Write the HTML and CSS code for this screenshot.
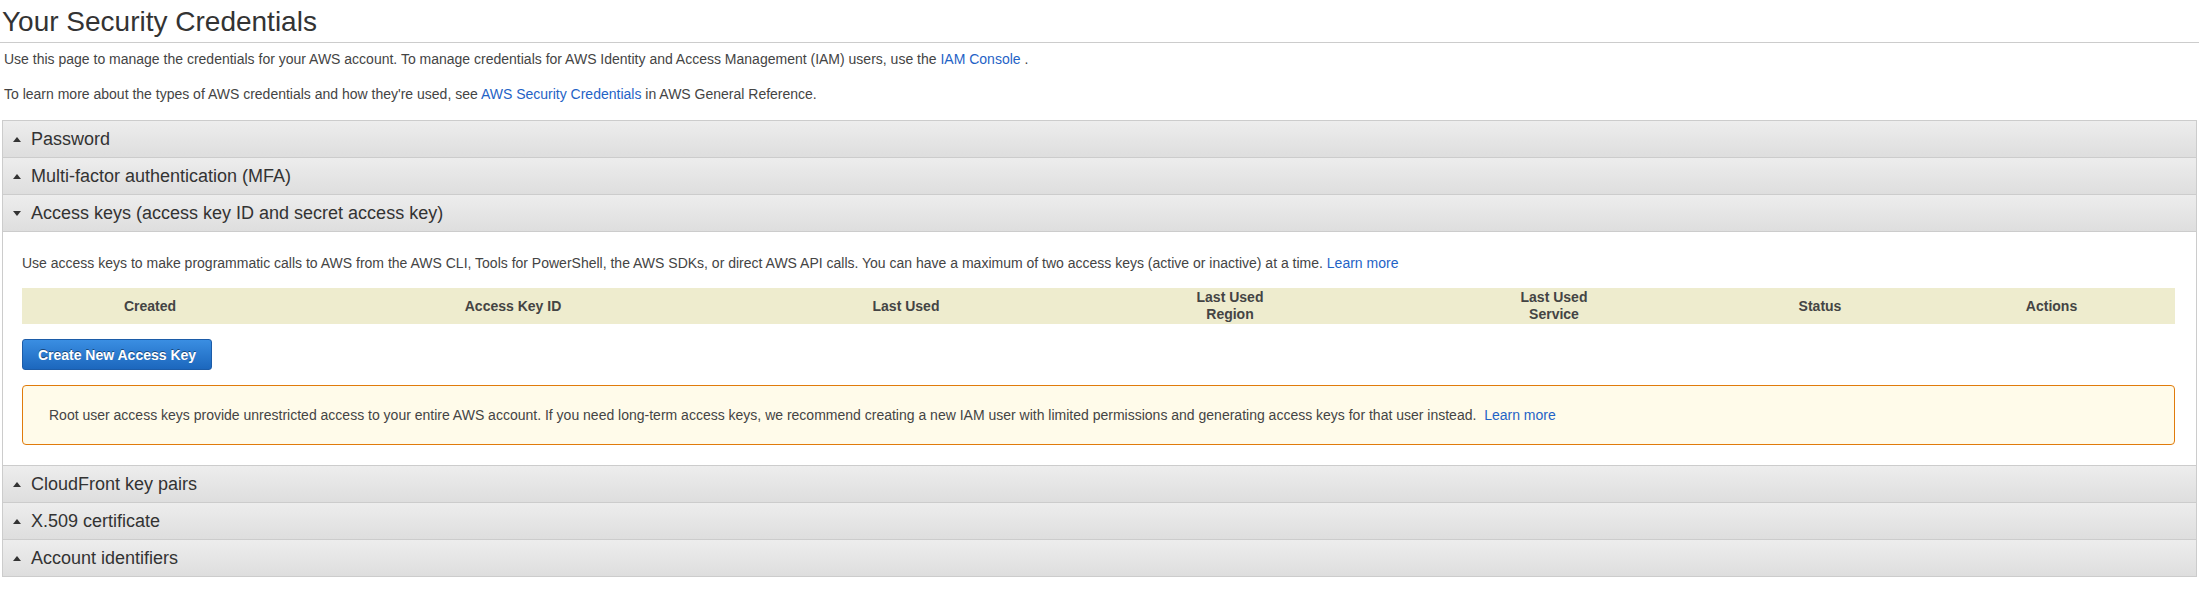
FILE: index.html
```html
<!DOCTYPE html>
<html lang="en">
<head>
<meta charset="utf-8">
<title>Your Security Credentials</title>
<link rel="stylesheet" href="styles.css">
</head>
<body>
<div class="page">
  <h1 class="title">Your Security Credentials</h1>
  <div class="content">
    <p class="intro first">Use this page to manage the credentials for your AWS account. To manage credentials for AWS Identity and Access Management (IAM) users, use the <a class="link" href="#">IAM Console</a> .</p>
    <p class="intro second">To learn more about the types of AWS credentials and how they're used, see <a class="link" href="#">AWS Security Credentials</a> in AWS General Reference.</p>

    <div class="accordion">
      <section class="acc-item">
        <div class="acc-head"><svg class="caret" viewBox="0 0 8 5" width="8" height="5"><polygon points="4,0 8,5 0,5"/></svg><span>Password</span></div>
      </section>
      <section class="acc-item">
        <div class="acc-head"><svg class="caret" viewBox="0 0 8 5" width="8" height="5"><polygon points="4,0 8,5 0,5"/></svg><span>Multi-factor authentication (MFA)</span></div>
      </section>
      <section class="acc-item open">
        <div class="acc-head"><svg class="caret" viewBox="0 0 8 5" width="8" height="5"><polygon points="0,0 8,0 4,5"/></svg><span>Access keys (access key ID and secret access key)</span></div>
        <div class="acc-body">
          <p class="desc">Use access keys to make programmatic calls to AWS from the AWS CLI, Tools for PowerShell, the AWS SDKs, or direct AWS API calls. You can have a maximum of two access keys (active or inactive) at a time. <a class="link" href="#">Learn more</a></p>
          <table class="keys">
            <colgroup>
              <col class="c1"><col class="c2"><col class="c3"><col class="c4"><col class="c5"><col class="c6"><col class="c7">
            </colgroup>
            <thead>
              <tr>
                <th>Created</th>
                <th>Access Key ID</th>
                <th>Last Used</th>
                <th>Last Used<br>Region</th>
                <th>Last Used<br>Service</th>
                <th>Status</th>
                <th>Actions</th>
              </tr>
            </thead>
          </table>
          <button class="btn-primary" type="button">Create New Access Key</button>
          <div class="warning">Root user access keys provide unrestricted access to your entire AWS account. If you need long-term access keys, we recommend creating a new IAM user with limited permissions and generating access keys for that user instead.&nbsp; <a class="link" href="#">Learn more</a></div>
        </div>
      </section>
      <section class="acc-item">
        <div class="acc-head"><svg class="caret" viewBox="0 0 8 5" width="8" height="5"><polygon points="4,0 8,5 0,5"/></svg><span>CloudFront key pairs</span></div>
      </section>
      <section class="acc-item">
        <div class="acc-head"><svg class="caret" viewBox="0 0 8 5" width="8" height="5"><polygon points="4,0 8,5 0,5"/></svg><span>X.509 certificate</span></div>
      </section>
      <section class="acc-item">
        <div class="acc-head"><svg class="caret" viewBox="0 0 8 5" width="8" height="5"><polygon points="4,0 8,5 0,5"/></svg><span>Account identifiers</span></div>
      </section>
    </div>
  </div>
</div>
</body>
</html>
```

FILE: styles.css
```css
html, body {
  margin: 0;
  padding: 0;
  background: #ffffff;
}

body {
  font-family: "Liberation Sans", Arial, sans-serif;
  color: #444444;
  font-size: 14px;
}

.title {
  margin: 0;
  padding: 6px 0 4px 2px;
  font-size: 28px;
  line-height: 32px;
  font-weight: normal;
  color: #333333;
  border-bottom: 1px solid #cccccc;
}

.content {
  padding: 0 2px;
}

.intro {
  margin: 0;
  padding-left: 2px;
  line-height: 16px;
}

.intro.first {
  margin-top: 8px;
}

.intro.second {
  margin-top: 19px;
}

.link {
  color: #1f63c6;
  text-decoration: none;
}

.accordion {
  margin-top: 18px;
  border: 1px solid #cccccc;
  border-bottom: none;
}

.acc-item {
  border-bottom: 1px solid #cccccc;
}

.acc-head {
  height: 36px;
  display: flex;
  align-items: center;
  padding-left: 10px;
  background: linear-gradient(#ededed, #dedede);
  font-size: 18px;
  color: #333333;
}

.acc-item.open .acc-head {
  border-bottom: 1px solid #cccccc;
}

.caret {
  fill: #333333;
  margin-right: 10px;
  flex: none;
}

.acc-body {
  padding: 23px 21px 20px 19px;
  display: flex;
  flex-direction: column;
  align-items: flex-start;
}

.desc {
  margin: 0;
  line-height: 16px;
}

.keys {
  margin-top: 17px;
  width: 100%;
  border-collapse: collapse;
  table-layout: fixed;
}

.keys .c1 { width: 256px; }
.keys .c2 { width: 470px; }
.keys .c3 { width: 316px; }
.keys .c4 { width: 332px; }
.keys .c5 { width: 316px; }
.keys .c6 { width: 216px; }
.keys .c7 { width: 247px; }

.keys th {
  background: #eeecce;
  height: 36px;
  padding: 0;
  font-weight: bold;
  font-size: 14px;
  line-height: 17px;
  color: #444444;
  text-align: center;
  vertical-align: middle;
}

.btn-primary {
  margin-top: 15px;
  width: 190px;
  height: 31px;
  padding: 0;
  border: 1px solid #1c5ca8;
  border-radius: 3px;
  background: linear-gradient(#3a8ee2, #1c67bd);
  color: #ffffff;
  font-family: "Liberation Sans", Arial, sans-serif;
  font-weight: bold;
  font-size: 14px;
  text-shadow: 0 -1px 0 rgba(0, 0, 0, 0.45);
  cursor: pointer;
}

.warning {
  margin-top: 15px;
  align-self: stretch;
  border: 1px solid #e07b0b;
  border-radius: 4px;
  background: #fffbea;
  padding: 21px 26px 20px 26px;
  line-height: 17px;
  color: #444444;
}
```
